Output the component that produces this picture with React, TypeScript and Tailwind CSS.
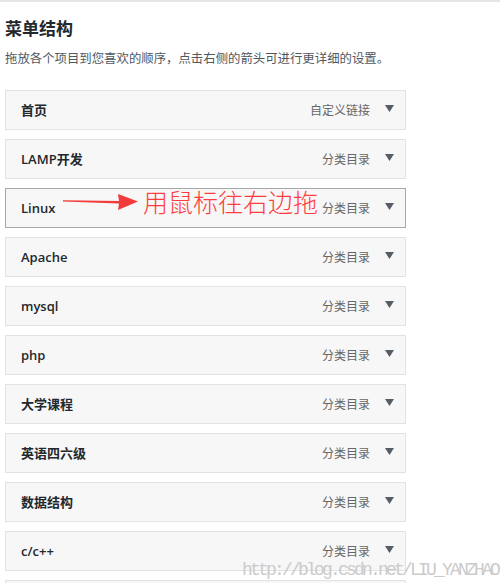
const ITEMS = [
  { name: '首页', type: '自定义链接' },
  { name: 'LAMP开发', type: '分类目录' },
  { name: 'Linux', type: '分类目录', active: true },
  { name: 'Apache', type: '分类目录' },
  { name: 'mysql', type: '分类目录' },
  { name: 'php', type: '分类目录' },
  { name: '大学课程', type: '分类目录' },
  { name: '英语四六级', type: '分类目录' },
  { name: '数据结构', type: '分类目录' },
  { name: 'c/c++', type: '分类目录' },
  { name: '', type: '' },
];

const font = "font-['Open_Sans','Noto_Sans_CJK_SC',sans-serif]";

const MenuItem = ({ name, type, active }: { name: string; type: string; active?: boolean }) => (
  <div
    className={`relative h-[40px] shrink-0 flex items-center bg-[#f7f7f7] border ${
      active ? 'border-[#a7a7a7]' : 'border-[#e2e2e2]'
    } pl-[15px] pr-[11px]`}
  >
    <span className="text-[13px] font-semibold text-[#23282d] flex-1 pt-[1px]">{name}</span>
    {type && <span className="text-[12px] text-[#666] mr-[15px] pt-[2px]">{type}</span>}
    {type && (
      <svg width="9" height="7" viewBox="0 0 9 7" className="mb-[3px]">
        <path d="M0 0 H9 L4.5 7 Z" fill="#555d66" />
      </svg>
    )}
  </div>
);

export default function App() {
  return (
    <div className={`relative w-[500px] h-[583px] overflow-hidden bg-white ${font}`}>
      <div className="h-[2px] bg-[#e6e6e6]" />
      <div className="pl-[5px] w-[406px]">
        <h2 className="mt-[15px] text-[17px] leading-[23px] font-bold text-[#23282d]">菜单结构</h2>
        <p className="mt-[9px] text-[12.4px] leading-[20px] text-[#50575e] whitespace-nowrap">
          拖放各个项目到您喜欢的顺序，点击右侧的箭头可进行更详细的设置。
        </p>
        <div className="mt-[21px] flex flex-col gap-[9px]">
          {ITEMS.map((it, i) => (
            <MenuItem key={i} {...it} />
          ))}
        </div>
      </div>

      {/* annotation */}
      <svg className="absolute left-[62px] top-[192px]" width="80" height="20" viewBox="0 0 80 20">
        <path d="M1 8.2 L57 9 L56 2 L76 9.5 L56 18 L57 11.5 L1 9.4 Z" fill="#f23a3a" />
      </svg>
      <span className="absolute left-[143px] top-[184px] text-[25px] leading-[34px] font-light text-[#ff3d3d] font-['Noto_Sans_CJK_SC',sans-serif]">
        用鼠标往右边拖
      </span>

      {/* watermark */}
      <span className="absolute left-[242px] top-[558px] text-[18px] leading-[24px] tracking-[-2.8px] text-[#cbcbcb] font-['Liberation_Mono',monospace] whitespace-nowrap">
        http://blog.csdn.net/LIU_YANZHAO
      </span>
    </div>
  );
}
